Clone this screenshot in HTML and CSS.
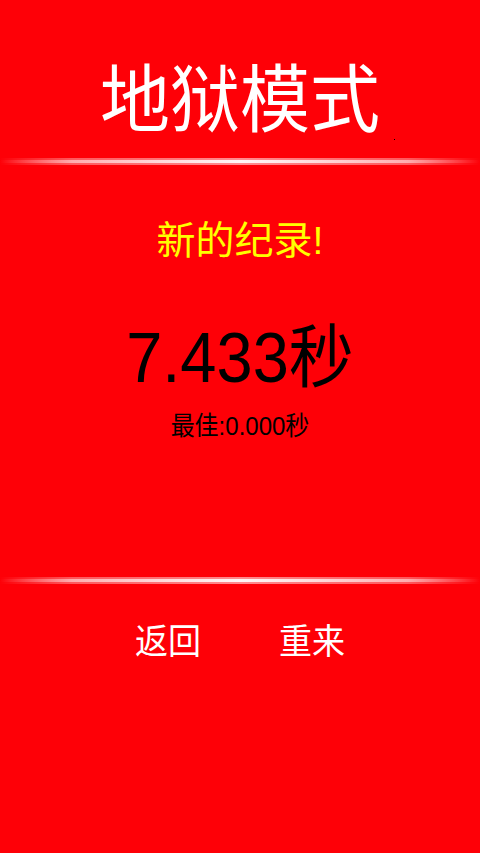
FILE: index.html
```html
<!DOCTYPE html>
<html lang="zh">
<head>
<meta charset="utf-8">
<link rel="stylesheet" href="styles.css">
</head>
<body>
<div class="screen">
  <header class="header">
    <h1 class="title">地狱模式</h1>
    <span class="dot"></span>
  </header>
  <div class="divider"><div class="divider-core"></div></div>
  <main class="result">
    <div class="record">新的纪录!</div>
    <div class="time">7.433秒</div>
    <div class="best">最佳:0.000秒</div>
  </main>
  <div class="divider divider-bottom"><div class="divider-core"></div></div>
  <nav class="actions">
    <span class="btn">返回</span>
    <span class="btn">重来</span>
  </nav>
</div>
</body>
</html>
```
FILE: styles.css
```css
html, body {
  margin: 0;
  padding: 0;
  background: #fe0007;
}
.screen {
  width: 480px;
  height: 853px;
  overflow: hidden;
  font-family: "Liberation Sans", "Noto Sans CJK SC", sans-serif;
}
.header {
  position: relative;
  padding-top: 66px;
  text-align: center;
}
.title {
  margin: 0;
  font-size: 70px;
  line-height: 70px;
  font-weight: normal;
  color: #fff;
  transform: scaleY(1.05);
}
.dot {
  position: absolute;
  left: 394px;
  top: 139px;
  width: 1px;
  height: 1px;
  background: #000;
}
.divider {
  margin-top: 22px;
  height: 7px;
  display: flex;
  align-items: center;
  background: linear-gradient(to right, rgba(255,255,255,0) 0%, rgba(255,255,255,0.35) 15%, rgba(255,255,255,0.55) 50%, rgba(255,255,255,0.35) 85%, rgba(255,255,255,0) 100%);
}
.divider-core {
  width: 100%;
  height: 3px;
  background: linear-gradient(to right, rgba(255,255,255,0) 0%, rgba(255,255,255,0.5) 15%, rgba(255,255,255,0.92) 50%, rgba(255,255,255,0.5) 85%, rgba(255,255,255,0) 100%);
}
.result {
  display: flex;
  flex-direction: column;
  align-items: center;
  padding-top: 56px;
}
.record {
  font-size: 39px;
  line-height: 39px;
  color: #ffff00;
}
.time {
  margin-top: 65px;
  font-size: 65px;
  line-height: 65px;
  color: #000;
  transform: scaleY(1.07);
}
.best {
  margin-top: 24px;
  font-size: 24px;
  line-height: 24px;
  color: #000;
  transform: scaleY(1.08);
}
.divider-bottom {
  margin-top: 139px;
}
.actions {
  display: flex;
  justify-content: center;
  gap: 78px;
  padding-top: 41px;
}
.btn {
  font-size: 33px;
  line-height: 33px;
  color: #fff;
  transform: scaleY(1.08);
}
```
